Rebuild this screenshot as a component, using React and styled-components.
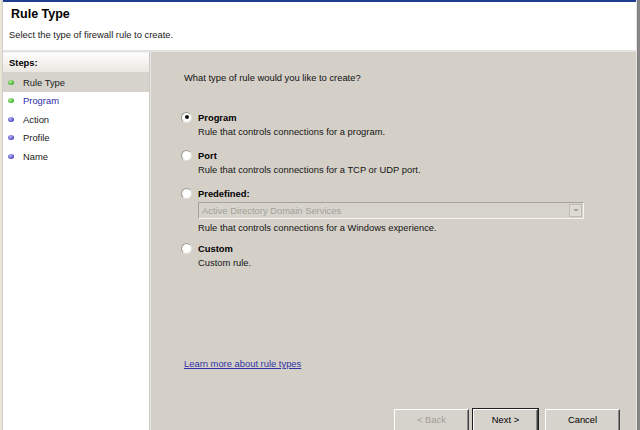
import React from "react";
import styled, { createGlobalStyle, css } from "styled-components";

const Global = createGlobalStyle`
  html, body { margin: 0; padding: 0; background: #d4d0c8; }
  body { font-family: "Liberation Sans", Arial, sans-serif; }
  * { box-sizing: border-box; }
`;

const Window = styled.div`
  width: 640px;
  height: 430px;
  overflow: hidden;
  display: flex;
  font-family: "Liberation Sans", Arial, sans-serif;
  font-size: 9.4px;
  color: #000;
`;

const LeftEdge = styled.div`
  width: 3px;
  flex: none;
  background: linear-gradient(to right, #e9e5d6 0, #e9e5d6 2px, #cfcfcf 2px);
`;

const RightEdge = styled.div`
  width: 4px;
  flex: none;
  background: linear-gradient(to right, #e6e6e6 0, #e6e6e6 1px, #7e7e7e 1px, #8a8a8a 4px);
`;

const Main = styled.div`
  flex: 1;
  display: flex;
  flex-direction: column;
  min-width: 0;
`;

const Header = styled.div`
  height: 52px;
  flex: none;
  background: #fff;
  border-top: 2px solid #1f3c8e;
  border-bottom: 2px solid #e2e2e2;
  padding: 5px 0 0 6px;
`;

const Title = styled.div`
  font-size: 12.5px;
  font-weight: bold;
  line-height: 15px;
  padding-left: 2px;
`;

const Subtitle = styled.div`
  margin-top: 7px;
  line-height: 12px;
  color: #1a1a1a;
`;

const Body = styled.div`
  flex: 1;
  display: flex;
  min-height: 0;
`;

const StepsPanel = styled.div`
  width: 147px;
  flex: none;
  background: #fff;
  border-right: 1px solid #c9c9c9;
  border-top: 1px solid #f2f2f2;
  display: flex;
  flex-direction: column;
`;

const StepsHeader = styled.div`
  height: 20px;
  padding-left: 6px;
  display: flex;
  align-items: center;
  font-weight: bold;
  background: linear-gradient(to bottom, #fdfdfc, #ebe8e2);
  border-bottom: 1px solid #d8d4cc;
`;

const StepRow = styled.div`
  height: 18.5px;
  display: flex;
  align-items: center;
  padding-left: 5px;
  gap: 9px;
  background: ${(p) => (p.$active ? "#d6d3cd" : "transparent")};
  color: ${(p) => (p.$link ? "#2d2da6" : "#1a1a1a")};
`;

const Dot = styled.span`
  width: 6px;
  height: 5px;
  border-radius: 50%;
  flex: none;
  background: ${(p) =>
    p.$done
      ? "radial-gradient(circle at 40% 35%, #b8f0a0, #3fae2a 70%)"
      : "radial-gradient(circle at 40% 35%, #b9b6f5, #4c46c2 70%)"};
`;

const Content = styled.div`
  flex: 1;
  background: #d4d0c8;
  border-left: 1px solid #e8e6e0;
  display: flex;
  flex-direction: column;
  padding: 20px 15px 0 30px;
  min-width: 0;
`;

const Question = styled.div`
  line-height: 11px;
  padding-left: 3px;
  color: #111;
`;

const Options = styled.div`
  margin-top: 28px;
  display: flex;
  flex-direction: column;
`;

const Option = styled.div`
  display: flex;
  flex-direction: column;
  margin-top: ${(p) => p.$top || 0}px;
`;

const OptionLabel = styled.label`
  display: flex;
  align-items: center;
  height: 12px;
  gap: 6px;
  font-weight: bold;
`;

const Radio = styled.span`
  width: 11px;
  height: 11px;
  border-radius: 50%;
  flex: none;
  background: radial-gradient(circle at 60% 60%, #ffffff 55%, #e4e2dc 100%);
  border: 1px solid #9d9d98;
  border-right-color: #e2e0da;
  border-bottom-color: #e2e0da;
  display: flex;
  align-items: center;
  justify-content: center;
  &::after {
    content: "";
    width: 4px;
    height: 4px;
    border-radius: 50%;
    background: ${(p) => (p.$checked ? "#111" : "transparent")};
  }
`;

const Desc = styled.div`
  margin-top: 3px;
  margin-left: 17px;
  line-height: 11px;
  color: #151515;
`;

const Combo = styled.div`
  margin: 3px 0 0 17px;
  width: 386px;
  height: 17px;
  border: 1px solid #a6a39c;
  border-right-color: #f4f3ef;
  border-bottom-color: #f4f3ef;
  background: #d7d4cd;
  display: flex;
  align-items: center;
  padding: 0 1px 0 3px;
  color: #a29f98;
`;

const ComboText = styled.span`
  flex: 1;
`;

const ComboButton = styled.span`
  width: 13px;
  height: 13px;
  border: 1px solid #bebbb4;
  background: #dedbd4;
  display: flex;
  align-items: center;
  justify-content: center;
  &::after {
    content: "";
    border-left: 3px solid transparent;
    border-right: 3px solid transparent;
    border-top: 3px solid #a8a59e;
  }
`;

const LearnLink = styled.a`
  margin-top: 90px;
  padding-left: 3px;
  color: #3232a6;
  text-decoration: underline;
  line-height: 11px;
  align-self: flex-start;
  cursor: pointer;
`;

const ButtonRow = styled.div`
  margin-top: 40px;
  display: flex;
  justify-content: flex-end;
  padding-right: 1px;
`;

const Button = styled.button`
  font-family: inherit;
  font-size: 9.4px;
  height: 23px;
  width: ${(p) => p.$w || 75}px;
  margin-left: ${(p) => p.$gap || 0}px;
  background: #d6d3cc;
  border: 1px solid #fff;
  border-right-color: #404040;
  border-bottom-color: #404040;
  box-shadow: inset -1px -1px 0 #888;
  color: #000;
  padding: 0 0 3px;
  ${(p) =>
    p.$default &&
    css`
      outline: 1px solid #202020;
      outline-offset: 0;
    `}
  ${(p) =>
    p.disabled &&
    css`
      color: #a19e97;
    `}
`;

const steps = [
  { label: "Rule Type", done: true, active: true },
  { label: "Program", done: true, link: true },
  { label: "Action" },
  { label: "Profile" },
  { label: "Name" },
];

export default function App() {
  return (
    <>
      <Global />
      <Window>
        <LeftEdge />
        <Main>
          <Header>
            <Title>Rule Type</Title>
            <Subtitle>Select the type of firewall rule to create.</Subtitle>
          </Header>
          <Body>
            <StepsPanel>
              <StepsHeader>Steps:</StepsHeader>
              {steps.map((s) => (
                <StepRow key={s.label} $active={s.active} $link={s.link}>
                  <Dot $done={s.done} />
                  {s.label}
                </StepRow>
              ))}
            </StepsPanel>
            <Content>
              <Question>What type of rule would you like to create?</Question>
              <Options>
                <Option>
                  <OptionLabel>
                    <Radio $checked />
                    Program
                  </OptionLabel>
                  <Desc>Rule that controls connections for a program.</Desc>
                </Option>
                <Option $top={12}>
                  <OptionLabel>
                    <Radio />
                    Port
                  </OptionLabel>
                  <Desc>Rule that controls connections for a TCP or UDP port.</Desc>
                </Option>
                <Option $top={12}>
                  <OptionLabel>
                    <Radio />
                    Predefined:
                  </OptionLabel>
                  <Combo>
                    <ComboText>Active Directory Domain Services</ComboText>
                    <ComboButton />
                  </Combo>
                  <Desc>Rule that controls connections for a Windows experience.</Desc>
                </Option>
                <Option $top={9}>
                  <OptionLabel>
                    <Radio />
                    Custom
                  </OptionLabel>
                  <Desc>Custom rule.</Desc>
                </Option>
              </Options>
              <LearnLink>Learn more about rule types</LearnLink>
              <ButtonRow>
                <Button disabled $w={75}>&lt; Back</Button>
                <Button $default $w={65} $gap={4}>Next &gt;</Button>
                <Button $w={75} $gap={7}>Cancel</Button>
              </ButtonRow>
            </Content>
          </Body>
        </Main>
        <RightEdge />
      </Window>
    </>
  );
}
